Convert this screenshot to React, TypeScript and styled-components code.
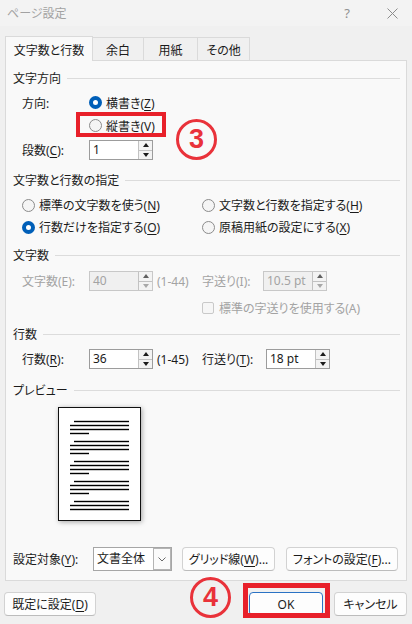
import React from 'react';
import styled, { createGlobalStyle } from 'styled-components';

const GlobalStyle = createGlobalStyle`
  html, body {
    margin: 0;
    padding: 0;
  }
  body {
    width: 412px;
    height: 624px;
    overflow: hidden;
    background: #f0f0f0;
    font-family: "Noto Sans", "Noto Sans CJK JP", sans-serif;
    font-size: 12px;
    color: #1b1b1b;
    font-feature-settings: "palt";
  }
  u {
    text-underline-offset: 2px;
  }
`;

const ACCENT = '#005fb8';
const RED = '#e8202a';

const Dialog = styled.div`
  width: 412px;
  height: 624px;
  display: flex;
  flex-direction: column;
  background: #f0f0f0;
`;

const TitleBar = styled.div`
  height: 26px;
  display: flex;
  align-items: center;
  padding-left: 7px;
  background: #f3f3f3;
  color: #a2a2a2;
`;

const Title = styled.span`
  flex: 1;
`;

const TitleButton = styled.span<{ $w: number }>`
  width: ${p => p.$w}px;
  display: flex;
  justify-content: center;
  align-items: center;
  color: #909090;
  font-size: 13px;
`;

const TabRow = styled.div`
  display: flex;
  align-items: flex-end;
  height: 25px;
  margin: 10px 0 -1px 5px;
  position: relative;
  z-index: 1;
`;

const Tab = styled.div<{ $active?: boolean; $w: number }>`
  width: ${p => p.$w}px;
  height: ${p => (p.$active ? 25 : 24)}px;
  box-sizing: border-box;
  display: flex;
  align-items: center;
  justify-content: center;
  padding-top: 1px;
  border: 1px solid #dadada;
  border-bottom: ${p => (p.$active ? 'none' : '1px solid #dadada')};
  background: ${p => (p.$active ? '#f9f9f9' : '#f0f0f0')};
  & + & {
    margin-left: -1px;
  }
`;

const Panel = styled.div`
  margin: 0 5px;
  height: 521px;
  box-sizing: border-box;
  border: 1px solid #dadada;
  background: #f9f9f9;
  padding: 0 6px 0 7px;
  display: flex;
  flex-direction: column;
`;

const SectionHeading = styled.div<{ $mt: number }>`
  display: flex;
  align-items: center;
  gap: 6px;
  height: 18px;
  margin-top: ${p => p.$mt}px;
  &::after {
    content: '';
    flex: 1;
    height: 1px;
    background: #dcdcdc;
  }
`;

const Row = styled.div<{ $mt?: number; $h?: number; $indent?: boolean }>`
  display: flex;
  align-items: center;
  height: ${p => p.$h ?? 24}px;
  margin-top: ${p => p.$mt ?? 0}px;
  margin-left: ${p => (p.$indent === false ? 0 : 9)}px;
  position: relative;
`;

const TwoCols = styled.div<{ $mt: number; $h: number }>`
  display: grid;
  grid-template-columns: 180px 1fr;
  grid-auto-rows: ${p => p.$h}px;
  align-items: center;
  margin: ${p => p.$mt}px 0 0 9px;
`;

const Cell = styled.div`
  display: flex;
  align-items: center;
`;

const FieldLabel = styled.span<{ $w: number; $disabled?: boolean }>`
  width: ${p => p.$w}px;
  flex: none;
  color: ${p => (p.$disabled ? '#a3a3a3' : 'inherit')};
`;

const RangeText = styled.span<{ $disabled?: boolean }>`
  margin-left: 4px;
  color: ${p => (p.$disabled ? '#a3a3a3' : 'inherit')};
`;

const RadioLabel = styled.label`
  display: flex;
  align-items: center;
  gap: 4px;
`;

const RadioDot = styled.span<{ $checked?: boolean }>`
  width: 13px;
  height: 13px;
  box-sizing: border-box;
  border-radius: 50%;
  flex: none;
  border: ${p => (p.$checked ? `4px solid ${ACCENT}` : '1px solid #8b8b8b')};
  background: ${p => (p.$checked ? '#fff' : '#f5f5f5')};
`;

const CheckBox = styled.span`
  width: 12px;
  height: 12px;
  box-sizing: border-box;
  border: 1px solid #c9c9c9;
  border-radius: 2px;
  background: #f6f6f6;
  flex: none;
`;

const CheckLabel = styled.label`
  display: flex;
  align-items: center;
  gap: 5px;
  margin-left: 180px;
  color: #a3a3a3;
`;

const SpinBox = styled.div<{ $w: number; $disabled?: boolean }>`
  width: ${p => p.$w}px;
  height: 20px;
  box-sizing: border-box;
  border: 1px solid ${p => (p.$disabled ? '#c8c8c8' : '#9c9c9c')};
  background: ${p => (p.$disabled ? '#f0f0f0' : '#fff')};
  display: flex;
  flex: none;
`;

const SpinValue = styled.span<{ $disabled?: boolean }>`
  flex: 1;
  padding-left: 3px;
  line-height: 18px;
  color: ${p => (p.$disabled ? '#a3a3a3' : 'inherit')};
`;

const SpinButtons = styled.div`
  width: 14px;
  display: flex;
  flex-direction: column;
`;

const SpinButton = styled.div<{ $down?: boolean }>`
  flex: 1;
  display: flex;
  align-items: center;
  justify-content: center;
  border-left: 1px solid #c2c2c2;
  border-top: ${p => (p.$down ? '1px solid #c2c2c2' : 'none')};
  background: #f3f3f3;
`;

const Arrow = styled.span<{ $down?: boolean; $color: string }>`
  width: 0;
  height: 0;
  border-left: 3.5px solid transparent;
  border-right: 3.5px solid transparent;
  ${p =>
    p.$down
      ? `border-top: 4px solid ${p.$color};`
      : `border-bottom: 4px solid ${p.$color};`}
`;

const PreviewPage = styled.div`
  width: 83px;
  height: 114px;
  box-sizing: border-box;
  margin: 8px 0 0 45px;
  border: 1px solid #111;
  background: #fff;
  box-shadow: 1px 1px 5px rgba(0, 0, 0, 0.35);
  flex: none;
`;

const SelectBox = styled.div`
  width: 79px;
  height: 24px;
  box-sizing: border-box;
  border: 1px solid #a6a6a6;
  background: #fff;
  display: flex;
  flex: none;
`;

const SelectValue = styled.span`
  flex: 1;
  padding-left: 3px;
  line-height: 22px;
`;

const SelectButton = styled.span`
  width: 16px;
  display: flex;
  align-items: center;
  justify-content: center;
  border: 1px solid #b4b4b4;
  background: #fbfbfb;
`;

const Button = styled.button<{ $w: number; $primary?: boolean; $ml?: number }>`
  width: ${p => p.$w}px;
  height: 24px;
  margin-left: ${p => p.$ml ?? 0}px;
  padding: 0;
  box-sizing: border-box;
  border: 1px solid ${p => (p.$primary ? '#2a72c4' : '#d2d2d2')};
  border-bottom-color: ${p => (p.$primary ? '#2a72c4' : '#bcbcbc')};
  border-radius: 4px;
  background: #fdfdfd;
  font: inherit;
  color: #1b1b1b;
  flex: none;
`;

const Footer = styled.div`
  flex: 1;
  display: flex;
  align-items: flex-start;
  padding: 11px 0 0 4px;
  position: relative;
`;

const Highlight = styled.div<{ $l: number; $t: number; $w: number; $h: number; $b: number }>`
  position: absolute;
  left: ${p => p.$l}px;
  top: ${p => p.$t}px;
  width: ${p => p.$w}px;
  height: ${p => p.$h}px;
  box-sizing: border-box;
  border: ${p => p.$b}px solid ${RED};
  pointer-events: none;
`;

const CircledNumber = styled.div<{ $l: number; $t: number }>`
  position: absolute;
  left: ${p => p.$l}px;
  top: ${p => p.$t}px;
  width: 41px;
  height: 41px;
  box-sizing: border-box;
  border: 3.5px solid #e9323a;
  border-radius: 50%;
  display: flex;
  align-items: center;
  justify-content: center;
  color: #e9323a;
  font-family: "Liberation Sans", Arial, sans-serif;
  font-weight: 700;
  font-size: 27px;
  line-height: 1;
`;

const Spin: React.FC<{ value: string; w: number; disabled?: boolean }> = ({ value, w, disabled }) => (
  <SpinBox $w={w} $disabled={disabled}>
    <SpinValue $disabled={disabled}>{value}</SpinValue>
    <SpinButtons>
      <SpinButton>
        <Arrow $color={disabled ? '#606060' : '#1b1b1b'} />
      </SpinButton>
      <SpinButton $down>
        <Arrow $down $color={disabled ? '#a8a8a8' : '#1b1b1b'} />
      </SpinButton>
    </SpinButtons>
  </SpinBox>
);

const Radio: React.FC<{ checked?: boolean; children: React.ReactNode }> = ({ checked, children }) => (
  <RadioLabel>
    <RadioDot $checked={checked} />
    <span>{children}</span>
  </RadioLabel>
);

// preview page: 5 paragraphs of 4 lines (last one 3), first line indented
const PreviewLines = () => {
  const lines: { x1: number; x2: number; y: number }[] = [];
  for (let p = 0; p < 5; p++) {
    const top = 13.5 + p * 20;
    lines.push({ x1: 15, x2: 70, y: top });
    lines.push({ x1: 11, x2: 70, y: top + 4 });
    lines.push({ x1: 11, x2: 70, y: top + 8 });
    if (p < 4) lines.push({ x1: 11, x2: 30, y: top + 12 });
  }
  return (
    <svg width="81" height="112" viewBox="0 0 81 112">
      {lines.map((l, i) => (
        <rect key={i} x={l.x1} y={l.y - 0.7} width={l.x2 - l.x1} height={1.4} fill="#000" />
      ))}
    </svg>
  );
};

const Chevron = () => (
  <svg width="8" height="5" viewBox="0 0 8 5">
    <path d="M0.5 0.5 L4 4 L7.5 0.5" fill="none" stroke="#6a6a6a" strokeWidth="1" />
  </svg>
);

const CloseIcon = () => (
  <svg width="11" height="11" viewBox="0 0 11 11">
    <path d="M0.5 0.5 L10.5 10.5 M10.5 0.5 L0.5 10.5" stroke="#8c8c8c" strokeWidth="1" />
  </svg>
);

const App: React.FC = () => {
  return (
    <>
      <GlobalStyle />
      <Dialog>
        <TitleBar>
          <Title>ページ設定</Title>
          <TitleButton $w={50}>?</TitleButton>
          <TitleButton $w={40}>
            <CloseIcon />
          </TitleButton>
        </TitleBar>

        <TabRow>
          <Tab $active $w={88}>文字数と行数</Tab>
          <Tab $w={52}>余白</Tab>
          <Tab $w={55}>用紙</Tab>
          <Tab $w={53}>その他</Tab>
        </TabRow>

        <Panel>
          <SectionHeading $mt={8}>文字方向</SectionHeading>
          <Row $mt={4} $h={23}>
            <FieldLabel $w={67}>方向:</FieldLabel>
            <Radio checked>
              横書き(<u>Z</u>)
            </Radio>
          </Row>
          <Row $h={23}>
            <FieldLabel $w={67} />
            <Radio>
              縦書き(<u>V</u>)
            </Radio>
            <Highlight $l={54} $t={-2} $w={90} $h={25} $b={4} />
            <CircledNumber $l={154} $t={5}>3</CircledNumber>
          </Row>
          <Row $mt={1}>
            <FieldLabel $w={67}>
              段数(<u>C</u>):
            </FieldLabel>
            <Spin value="1" w={64} />
          </Row>

          <SectionHeading $mt={9}>文字数と行数の指定</SectionHeading>
          <TwoCols $mt={5} $h={22}>
            <Radio>
              標準の文字数を使う(<u>N</u>)
            </Radio>
            <Radio>
              文字数と行数を指定する(<u>H</u>)
            </Radio>
            <Radio checked>
              行数だけを指定する(<u>O</u>)
            </Radio>
            <Radio>
              原稿用紙の設定にする(<u>X</u>)
            </Radio>
          </TwoCols>

          <SectionHeading $mt={8}>文字数</SectionHeading>
          <TwoCols $mt={5} $h={24}>
            <Cell>
              <FieldLabel $w={67} $disabled>
                文字数(E):
              </FieldLabel>
              <Spin value="40" w={64} disabled />
              <RangeText $disabled>(1-44)</RangeText>
            </Cell>
            <Cell>
              <FieldLabel $w={61} $disabled>
                字送り(I):
              </FieldLabel>
              <Spin value="10.5 pt" w={64} disabled />
            </Cell>
          </TwoCols>
          <Row $mt={4} $h={22}>
            <CheckLabel>
              <CheckBox />
              標準の字送りを使用する(A)
            </CheckLabel>
          </Row>

          <SectionHeading $mt={6}>行数</SectionHeading>
          <TwoCols $mt={4} $h={24}>
            <Cell>
              <FieldLabel $w={67}>
                行数(<u>R</u>):
              </FieldLabel>
              <Spin value="36" w={64} />
              <RangeText>(1-45)</RangeText>
            </Cell>
            <Cell>
              <FieldLabel $w={64}>
                行送り(<u>T</u>):
              </FieldLabel>
              <Spin value="18 pt" w={64} />
            </Cell>
          </TwoCols>

          <SectionHeading $mt={10}>プレビュー</SectionHeading>
          <PreviewPage>
            <PreviewLines />
          </PreviewPage>

          <Row $mt={26} $indent={false}>
            <FieldLabel $w={80}>
              設定対象(<u>Y</u>):
            </FieldLabel>
            <SelectBox>
              <SelectValue>文書全体</SelectValue>
              <SelectButton>
                <Chevron />
              </SelectButton>
            </SelectBox>
            <Button $w={93} $ml={10}>
              グリッド線(<u>W</u>)...
            </Button>
            <Button $w={112} $ml={11}>
              フォントの設定(<u>F</u>)...
            </Button>
          </Row>
        </Panel>

        <Footer>
          <Button $w={92}>
            既定に設定(<u>D</u>)
          </Button>
          <Button $w={74} $ml={153} $primary>
            OK
          </Button>
          <Button $w={73} $ml={11}>
            キャンセル
          </Button>
          <Highlight $l={243} $t={2} $w={87} $h={35} $b={5} />
          <CircledNumber $l={190} $t={-4}>4</CircledNumber>
        </Footer>
      </Dialog>
    </>
  );
};

export default App;
